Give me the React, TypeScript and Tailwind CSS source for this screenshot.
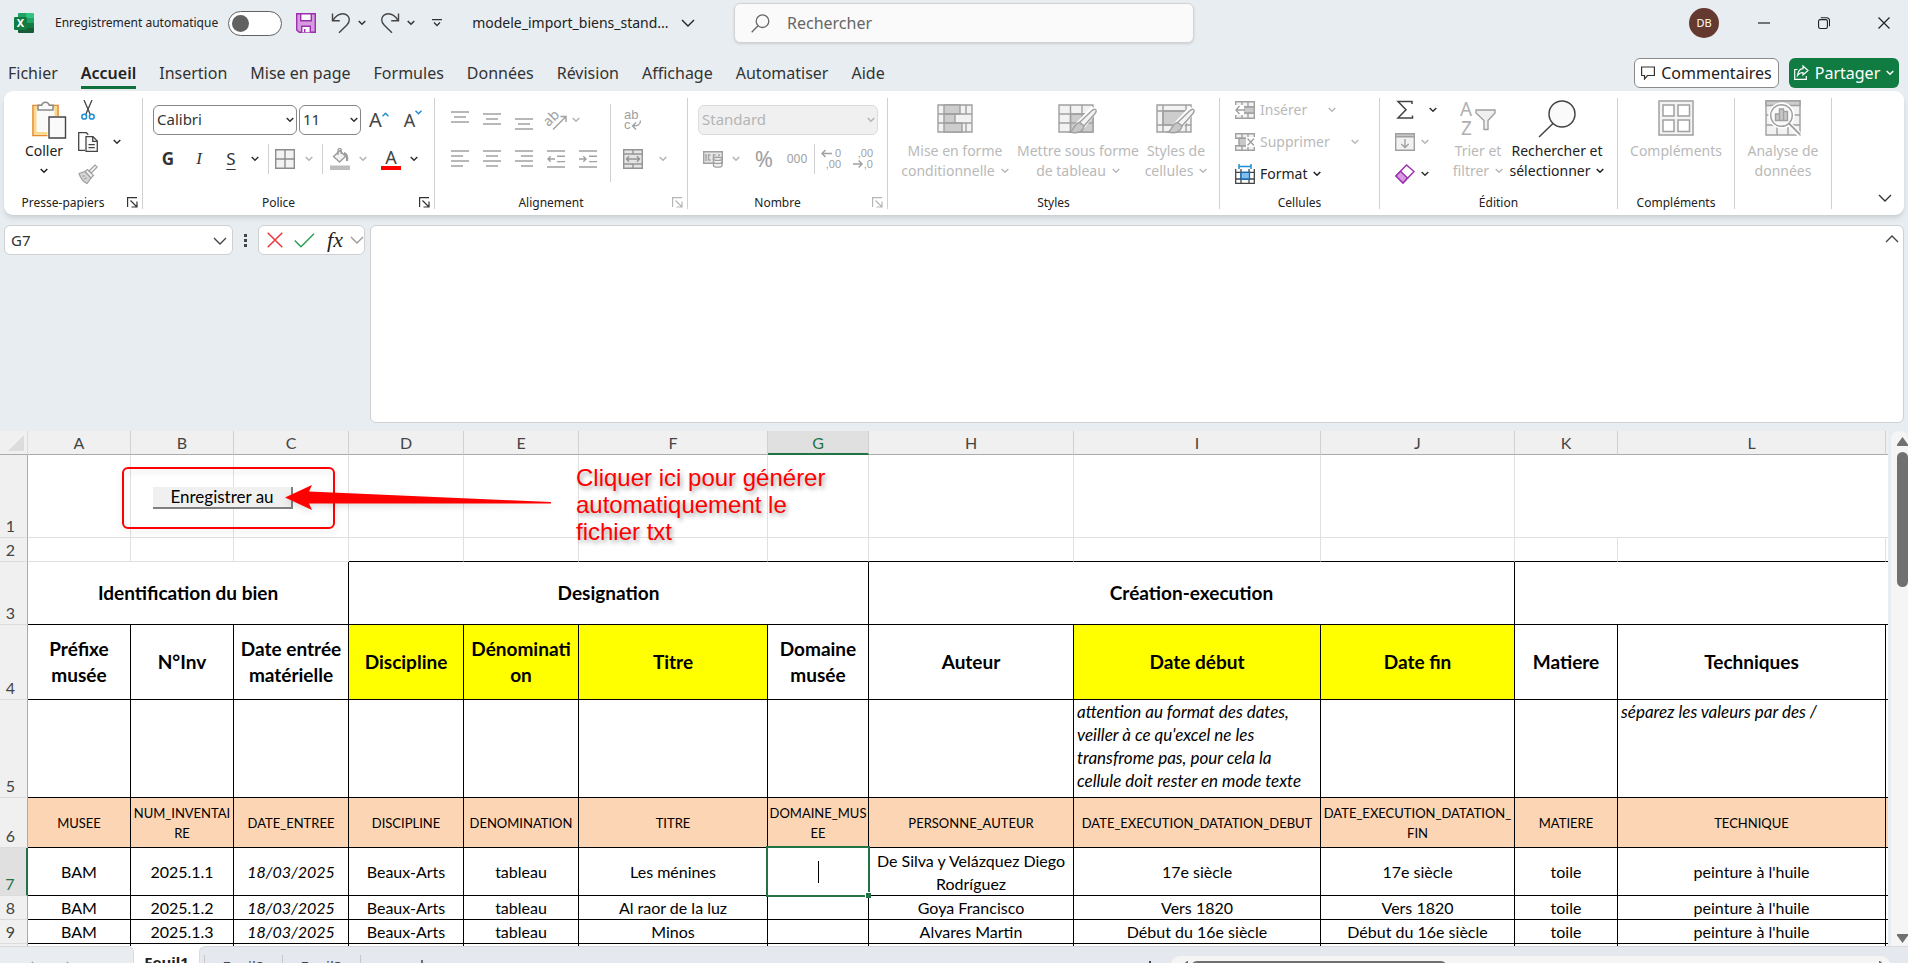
import React from 'react';
import clsx from 'clsx';

const GREY = '#a0a0a0';
const DARK = '#444444';

/* ---------- Icons ---------- */

function Chevron({ big, className }: { big?: boolean; className?: string }) {
  return big ? (
    <svg width="14" height="8" viewBox="0 0 14 8" fill="none" stroke="currentColor" strokeWidth="1.4" className={className}>
      <path d="M1 1l6 6 6-6" />
    </svg>
  ) : (
    <svg width="8" height="6" viewBox="0 0 8 6" fill="none" stroke="currentColor" strokeWidth="1.5" className={className}>
      <path d="M0.7 1L4 4.3 7.3 1" />
    </svg>
  );
}

const ExcelLogo = () => (
  <svg width="20" height="20" viewBox="0 0 20 20">
    <path d="M4 1a1 1 0 011-1h7v5H4z" fill="#21a366" />
    <path d="M12 0h7a1 1 0 011 1v4h-8z" fill="#33c481" />
    <path d="M4 5h8v5H4z" fill="#107c41" />
    <path d="M12 5h8v5h-8z" fill="#21a366" />
    <path d="M4 10h8v5H4z" fill="#185c37" />
    <path d="M12 10h8v5h-8z" fill="#107c41" />
    <path d="M4 15h16v4a1 1 0 01-1 1H5a1 1 0 01-1-1z" fill="#185c37" />
    <rect x="0" y="4" width="13" height="13" rx="1.2" fill="#107c41" />
    <text x="6.5" y="14.3" textAnchor="middle" fontSize="11" fontWeight="bold" fontFamily="Noto Sans, sans-serif" fill="#fff">
      X
    </text>
  </svg>
);

const SaveIcon = () => (
  <svg width="20" height="20" viewBox="0 0 20 20" stroke="#9b2fae" strokeWidth="1.4">
    <path d="M.7.7h18.6v18.6H3.2L.7 17z" fill="#d79be0" />
    <path d="M4.7.7h10.6v7H4.7z" fill="#fafafa" />
    <path d="M5.7 19.3v-6h8.6v6" fill="#fafafa" />
    <path d="M8.7 16v3.3" />
  </svg>
);

const UndoIcon = ({ flip }: { flip?: boolean }) => (
  <svg width="20" height="22" viewBox="0 0 20 22" fill="none" stroke={DARK} strokeWidth="1.4" className={clsx(flip && '-scale-x-100')}>
    <path d="M1.5 1.5v7.3h7.3" />
    <path d="M1.8 8.5C4.5 4.5 7.5 1.8 11.6 1.8c4 0 6.7 2.8 6.7 6 0 2.2-1 3.8-2.6 5.4L8 20.8" />
  </svg>
);

const PasteIcon = () => (
  <svg width="36" height="40" viewBox="0 0 36 40">
    <path d="M2 5.5h25v30H2z" fill="#fafafa" stroke="#e58b2f" strokeWidth="1.6" />
    <path d="M4.2 7.7h20.6v25.6H4.2z" fill="#fafafa" stroke="#fbd98a" strokeWidth="2.6" />
    <path d="M7 10V5.2h3.8a3.8 3.8 0 017.4 0H22V10z" fill="#fafafa" stroke="#8a8a8a" strokeWidth="1.5" />
    <rect x="16.5" y="16" width="19" height="23.5" fill="#fff" />
    <path d="M18 17h16.5v21H18z" fill="#fafafa" stroke={DARK} strokeWidth="1.4" />
  </svg>
);

const CutIcon = () => (
  <svg width="14" height="20" viewBox="0 0 14 20" fill="none">
    <path d="M3 0l6.5 15M11 0L4.5 15" stroke={DARK} strokeWidth="1.3" />
    <circle cx="3.2" cy="16.7" r="2.4" stroke="#1e8fd6" strokeWidth="1.5" />
    <circle cx="10.8" cy="16.7" r="2.4" stroke="#1e8fd6" strokeWidth="1.5" />
  </svg>
);

const CopyIcon = () => (
  <svg width="20" height="20" viewBox="0 0 20 20" stroke={DARK} strokeWidth="1.3">
    <path d="M7 18.3H.7V.7h7.6l2 2" fill="none" />
    <path d="M8 4.7h7l4.3 4.3v10.3H8z" fill="#fafafa" />
    <path d="M14.7 4.7v4.6h4.6M10.5 12.7h6.3M10.5 15.7h6.3" fill="none" />
  </svg>
);

const PainterIcon = () => (
  <svg width="20" height="20" viewBox="0 0 20 20" stroke={GREY} strokeWidth="1.2">
    <path d="M1 9.5l6-2 6 6.5-4 5.5C5.5 18 2.5 14 1 9.5z" fill="#d5d5d5" />
    <path d="M7 7.5l2.5-2 6 6-2.5 2.5z" fill="#f2f2f2" />
    <path d="M11 7l6-6 2.2 2-5.7 6z" fill="#f2f2f2" />
    <path d="M4 12l3 0M6 15l3-1" fill="none" />
  </svg>
);

const Launcher = ({ disabled }: { disabled?: boolean }) => (
  <svg width="11" height="11" viewBox="0 0 11 11" fill="none" stroke={disabled ? '#b5b5b5' : '#333'} strokeWidth="1.2">
    <path d="M.6 10V.6H10M3.5 3.5l6.5 6.5M10 4.5V10H4.5" />
  </svg>
);

const GrowIcon = ({ down }: { down?: boolean }) => (
  <span className="flex items-start text-[#444]">
    <span className={clsx(down ? 'text-lg leading-7' : 'text-xl leading-6')}>A</span>
    <svg width="7" height="5" viewBox="0 0 7 5" fill="none" stroke="#1e8fd6" strokeWidth="1.5" className="mt-1">
      <path d={down ? 'M.5 .7l3 3 3-3' : 'M.5 4.3l3-3 3 3'} />
    </svg>
  </span>
);

const BordersIcon = () => (
  <svg width="20" height="20" viewBox="0 0 20 20" stroke="#8c8c8c" strokeWidth="1.4" fill="#f2f2f2">
    <path d="M.7.7h18.6v18.6H.7zM10 .7v18.6M.7 10h18.6" />
  </svg>
);

const FillIcon = () => (
  <svg width="20" height="22" viewBox="0 0 20 22" fill="none" stroke="#9a9a9a" strokeWidth="1.3">
    <path d="M3.5 8.5L10 2.5l5.5 6-6 5.5z" fill="#f2f2f2" />
    <path d="M8 7V2a1.6 1.6 0 013.2 0v4" />
    <path d="M14 5c2.5.5 3.5 3 3 8" strokeWidth="2.2" />
    <path d="M0 17.5h20V22H0z" fill="#bdbdbd" stroke="none" />
  </svg>
);

const FontColorIcon = () => (
  <span className="flex w-5 flex-col items-center">
    <span className="text-lg leading-[18px] text-[#444]">A</span>
    <span className="h-1 w-full bg-[#ff0000]" />
  </span>
);

/* strokes, each one given as [x, y, width] */
const Lines = ({ rows }: { rows: number[][] }) => (
  <svg width="18" height="22" viewBox="0 0 18 22" stroke={GREY} strokeWidth="1.5">
    {rows.map(([x, y, w]) => (
      <path key={y} d={`M${x} ${y}h${w}`} />
    ))}
  </svg>
);

const IndentIcon = ({ right }: { right?: boolean }) => (
  <svg width="18" height="18" viewBox="0 0 18 18" fill="none" stroke={GREY} strokeWidth="1.4">
    <path d="M0 1h18M10 6.3h8M10 11.6h8M0 17h18" />
    <path d={right ? 'M0 9h7M4.3 6.2L7 9l-2.7 2.8' : 'M1 9h7M3.7 6.2L1 9l2.7 2.8'} />
  </svg>
);

const OrientationIcon = () => (
  <svg width="22" height="22" viewBox="0 0 22 22" fill="none" stroke={GREY} strokeWidth="1.4" className="overflow-visible">
    <text x="1" y="16" transform="rotate(-45 5 14)" fontSize="14" fontFamily="Noto Sans, sans-serif" fill={GREY} stroke="none">
      ab
    </text>
    <path d="M8 20.5L20.5 8M15.5 7.5h5.5V13" />
  </svg>
);

const WrapIcon = () => (
  <svg width="20" height="22" viewBox="0 0 20 22" fill="none" stroke={GREY} strokeWidth="1.4" className="overflow-visible">
    <g fontSize="13" fontFamily="Liberation Sans, sans-serif" fill={GREY} stroke="none">
      <text x="1" y="10">ab</text>
      <text x="1" y="20">c</text>
    </g>
    <path d="M17.5 11.5c0 4-2 5.5-8 5.500M13 13.500L9.500 17l3.500 3.500" />
  </svg>
);

const MergeIcon = () => (
  <svg width="20" height="20" viewBox="0 0 20 20" fill="none" stroke="#949494" strokeWidth="1.4">
    <path d="M.7.7h18.6v18.6H.7z" fill="#e4e4e4" />
    <path d="M.7 5h18.6M.7 15h18.6M10 .7V5M10 15v4.3M3.5 10h13M6 7.3L3.5 10 6 12.7M14 7.3l2.5 2.7-2.5 2.7" />
  </svg>
);

const CurrencyIcon = () => (
  <svg width="20" height="18" viewBox="0 0 20 18" fill="none" stroke={GREY} strokeWidth="1.4">
    <path d="M.7 1.7h18.6v11.6H.7z" fill="#e6e6e6" />
    <path d="M3 4v7M7.5 5h-2v5h2M12.5 5h-2v5M16 4v2" />
    <path d="M10.5 9v6.5c0 2.2 8.5 2.2 8.5 0V9" fill="#f4f4f4" />
    <ellipse cx="14.7" cy="8.8" rx="4.3" ry="1.6" fill="#f4f4f4" />
    <path d="M10.5 12c0 2 8.5 2 8.5 0" />
  </svg>
);

const DecimalIcon = ({ less }: { less?: boolean }) => (
  <svg width="20" height="22" viewBox="0 0 20 22" fill="none" stroke={GREY} strokeWidth="1.4" className="overflow-visible">
    <g fontSize="11" fontFamily="Liberation Sans, sans-serif" fill={GREY} stroke="none" textAnchor="end">
      <text x="20" y="9">{less ? ',00' : '0'}</text>
      <text x="20" y="20">{less ? ',0' : ',00'}</text>
    </g>
    <path d={less ? 'M0 16h9M5.7 12.500L9 16l-3.300 3.500' : 'M1 5.500h10M4.500 2L1 5.500 4.500 9'} />
  </svg>
);

const Brush = () => (
  <>
    <path d="M34 9l3 2.5-11 14-6-1.5z" fill="#fff" stroke="#fff" strokeWidth="4" />
    <path d="M37.5 9.5c1.3.8.5 2.5-.5 4L26 26l-4.5-3.5L33.5 11c1.2-1.2 2.8-2.3 4-1.5z" fill="#f4f4f4" />
    <path d="M21.5 22.5L26 26c-1 6-7 8-14 6 4-1 3-8 9.5-9.5z" fill="#c8c8c8" />
  </>
);

const CondFormatIcon = () => (
  <svg width="36" height="36" viewBox="0 0 36 36" fill="none" stroke={GREY} strokeWidth="1.4">
    <path d="M1 5h34v27H1z" fill="#f2f2f2" />
    <path d="M7 5h16v9H7zM7 23h18v9H7z" fill="#cdcdcd" />
    <path d="M7 14h11v9H7z" fill="#cdcdcd" />
    <path d="M1 14h34M1 23h34M29 5v9M29 23v9" />
  </svg>
);

const TableFormatIcon = () => (
  <svg width="40" height="36" viewBox="0 0 40 36" stroke={GREY} strokeWidth="1.4">
    <path d="M1 5h34v27H1z" fill="#f2f2f2" />
    <path d="M12.5 14H35v18H12.5z" fill="#cdcdcd" />
    <path d="M1 14h34M1 23h34M12.5 5v27M24 5v27" fill="none" />
    <Brush />
  </svg>
);

const CellStylesIcon = () => (
  <svg width="40" height="36" viewBox="0 0 40 36" stroke={GREY} strokeWidth="1.4">
    <path d="M1 5h34v27H1z" fill="#f2f2f2" />
    <path d="M7 11h23v14H7z" fill="#cdcdcd" />
    <path d="M1 11h34M1 25h34M7 5v27M30 5v27" fill="none" />
    <Brush />
  </svg>
);

const InsertCellsIcon = () => (
  <svg width="20" height="18" viewBox="0 0 20 18" fill="#f2f2f2" stroke={GREY} strokeWidth="1.4">
    <path d="M.7.7h18.6v16.6H.7zM.7 6h18.6M.7 12h18.6M7 .7v16.6M13 .7v16.6" />
    <path d="M7 6h12.3v6H7z" fill="#c8c8c8" />
    <path d="M0 4h9v10H0z" fill="#fff" stroke="none" />
    <path d="M1 9h9M4.5 5L1 9l3.5 4" fill="none" />
  </svg>
);

const DeleteCellsIcon = () => (
  <svg width="20" height="18" viewBox="0 0 20 18" fill="#f2f2f2" stroke={GREY} strokeWidth="1.4">
    <path d="M.7.7h18.6v4.5H.7zM.7 12.7h18.6v4.6H.7zM7 .7v16.6M13 .7v4.5M13 12.7v4.6" />
    <path d="M4 5.2h8v7.5H4z" fill="#c8c8c8" />
    <path d="M11 4h9v10h-9z" fill="#fff" stroke="none" />
    <path d="M12.5 5.5l6.5 7M19 5.5l-6.5 7" fill="none" />
  </svg>
);

const FormatCellsIcon = () => (
  <svg width="20" height="20" viewBox="0 0 20 20" fill="none" stroke={DARK} strokeWidth="1.3">
    <path d="M.7 5v14.3h18.6V5M.7 8.3h18.6M.7 15h18.6M6 5v14.3M14 5v14.3" />
    <path d="M6 8.3h8.5V15H6z" fill="#83beec" stroke="#0f6cbd" />
    <path d="M4 2.5h12M4 0v5M16 0v5" stroke="#1e8fd6" strokeWidth="1.5" />
  </svg>
);

const SumIcon = () => (
  <svg width="18" height="20" viewBox="0 0 18 20" fill="none" stroke={DARK} strokeWidth="1.5">
    <path d="M16 4V1.5H2l8 8.3-8 8.2h14.5V15.5" />
  </svg>
);

const FillDownIcon = () => (
  <svg width="20" height="18" viewBox="0 0 20 18" fill="none" stroke={GREY} strokeWidth="1.4">
    <path d="M.7.7h18.6v16.6H.7z" fill="#f2f2f2" />
    <path d="M.7.7h18.6v3H.7z" fill="#c8c8c8" />
    <path d="M10 6v8.5M6.3 11l3.7 3.5 3.7-3.5" />
  </svg>
);

const EraserIcon = () => (
  <svg width="20" height="20" viewBox="0 0 20 20" stroke="#9b2fae" strokeWidth="1.4">
    <path d="M1 12L11.5 1l7.5 6.5L8 19z" fill="#fff" />
    <path d="M1 12l4.500-4.700 7 6.700L8 19z" fill="#d79be0" />
  </svg>
);

const SortFilterIcon = () => (
  <svg width="36" height="36" viewBox="0 0 36 36" fill="none" stroke={GREY} strokeWidth="1.4">
    <g fontSize="19" fontFamily="Noto Sans, sans-serif" fill="#b0b0b0" stroke="none">
      <text x="0" y="16">A</text>
      <text x="1" y="35">Z</text>
    </g>
    <path d="M16 10h19v3l-7 7.5v9h-4v-9L16 13z" fill="#f0f0f0" />
  </svg>
);

const FindIcon = () => (
  <svg width="38" height="38" viewBox="0 0 38 38" fill="#fafafa" stroke={DARK} strokeWidth="1.5">
    <circle cx="24" cy="14" r="13" />
    <path d="M15 23.5L1 37" />
  </svg>
);

const AddinsIcon = () => (
  <svg width="36" height="36" viewBox="0 0 36 36" fill="#f4f4f4" stroke={GREY} strokeWidth="1.5">
    <path d="M1 1h34v34H1z" />
    <path d="M5 5h11v11H5zM20 5h11.5v11H20zM5 20h11v11.5H5zM20 20h11.5v11.5H20z" fill="#fff" />
  </svg>
);

const AnalysisIcon = () => (
  <svg width="36" height="36" viewBox="0 0 36 36" fill="none" stroke={GREY} strokeWidth="1.4">
    <path d="M1 1h34v34H1z" fill="#f2f2f2" />
    <path d="M1 1h34v4.5H1z" fill="#cdcdcd" />
    <path d="M1 15h34M1 25h34M12 25v10M23 25v10" />
    <circle cx="16.5" cy="15.5" r="12.5" fill="#fff" stroke="#fff" />
    <path d="M24 24l11 11" stroke="#fff" strokeWidth="5" />
    <circle cx="16.5" cy="15.5" r="10.8" fill="#fafafa" />
    <path d="M24 23.5L35 34.5" strokeWidth="1.8" />
    <path d="M10.5 14h4v6.5h-4zM14.5 9h4v11.5h-4zM18.5 11.5h4v9h-4z" fill="#c8c8c8" />
  </svg>
);

/* ---------- Ribbon building blocks ---------- */

interface GroupProps {
  label?: string;
  width: string;
  launcher?: 'on' | 'off';
  children: React.ReactNode;
}

function Group({ label, width, launcher, children }: GroupProps) {
  return (
    <>
      <section className={clsx('flex shrink-0 flex-col pt-[3px]', width)} aria-label={label}>
        <div className="flex h-24">{children}</div>
        <div className="flex h-[25px] items-center text-xs text-[#222]">
          <span className="flex-1 text-center">{label}</span>
          {launcher && (
            <button className="flex w-5 justify-center" aria-label={`Options ${label}`}>
              <Launcher disabled={launcher === 'off'} />
            </button>
          )}
        </div>
      </section>
      <div className="h-[111px] w-px shrink-0 self-center bg-[#d0d0d0]" />
    </>
  );
}

interface BigButtonProps {
  icon: React.ReactNode;
  lines: string[];
  width: string;
  chevron?: boolean;
  enabled?: boolean;
}

function BigButton({ icon, lines, width, chevron, enabled }: BigButtonProps) {
  return (
    <button className={clsx('flex shrink-0 flex-col items-center pt-[6px] text-sm leading-5', width, enabled ? 'text-[#222]' : 'text-[#b9b9b9]')}>
      <span className="flex h-[41px] items-start">{icon}</span>
      {lines.map((line, i) => (
        <span key={line} className="flex items-center gap-[6px] whitespace-nowrap">
          {line}
          {chevron && i === lines.length - 1 && <Chevron />}
        </span>
      ))}
    </button>
  );
}

const Cell = ({ w = 'w-8', label, children }: { w?: string; label: string; children: React.ReactNode }) => (
  <button aria-label={label} className={clsx('flex h-8 shrink-0 items-center justify-center', w)}>
    {children}
  </button>
);

const VSep = () => <span className="h-[30px] w-px bg-[#d0d0d0]" />;

interface ComboProps {
  label: string;
  value: string;
  width: string;
  disabled?: boolean;
}

function Combo({ label, value, width, disabled }: ComboProps) {
  return (
    <div className={clsx('relative', width, disabled ? 'text-[#b5b5b5]' : 'text-[#333]')}>
      <select
        aria-label={label}
        disabled={disabled}
        className={clsx(
          'h-[30px] w-full appearance-none rounded-md border px-[3px] text-[15px] opacity-100 outline-none',
          disabled ? 'border-[#dcdcdc] bg-[#f0f0f0]' : 'border-[#868686] bg-white'
        )}
      >
        <option>{value}</option>
      </select>
      <Chevron className="pointer-events-none absolute right-[3px] top-3" />
    </div>
  );
}

/* ---------- Title bar and tabs ---------- */

function TitleBar() {
  return (
    <header className="flex h-[46px] shrink-0 items-center">
      <div className="flex h-full w-[734px] shrink-0 items-center pl-[14px]">
        <ExcelLogo />
        <label htmlFor="autosave" className="ml-[21px] text-xs text-[#222]">
          Enregistrement automatique
        </label>
        <input
          id="autosave"
          type="checkbox"
          className="ml-[10px] h-[25px] w-[54px] appearance-none rounded-full border border-[#616161] bg-white before:ml-[3px] before:mt-[3px] before:block before:h-[17px] before:w-[17px] before:rounded-full before:bg-[#616161]"
        />
        <button aria-label="Enregistrer" className="ml-[14px]"><SaveIcon /></button>
        <button aria-label="Annuler" className="ml-[15px]"><UndoIcon /></button>
        <Chevron className="ml-[7px] text-[#333]" />
        <button aria-label="Rétablir" className="ml-[14px]"><UndoIcon flip /></button>
        <Chevron className="ml-[7px] text-[#333]" />
        <button aria-label="Personnaliser" className="ml-[17px]">
          <svg width="10" height="8" viewBox="0 0 10 8" fill="none" stroke="#333" strokeWidth="1.3">
            <path d="M0 .7h10M2 3.5l3 3 3-3" />
          </svg>
        </button>
        <button className="ml-[30px] flex items-center gap-3 whitespace-nowrap text-sm text-[#222]">
          modele_import_biens_stand...
          <Chevron big />
        </button>
      </div>
      <div className="mt-[3px] flex h-10 w-[460px] shrink-0 items-center gap-[17px] self-start rounded-md border border-[#d3d3d3] bg-[#fafafa] pl-4 shadow-sm">
        <svg width="19" height="19" viewBox="0 0 19 19" fill="none" stroke="#666" strokeWidth="1.3">
          <circle cx="11.5" cy="7.2" r="6.3" />
          <path d="M7 11.8L.7 18.3" />
        </svg>
        <input aria-label="Rechercher" placeholder="Rechercher" className="flex-1 bg-transparent text-base outline-none placeholder:text-[#666]" />
      </div>
      <div className="flex h-full flex-1 items-center justify-end gap-12 pr-[18px]">
        <button aria-label="Compte" className="-mr-[9px] h-[30px] w-[30px] rounded-full bg-[#643a30] text-[11px] text-white">
          DB
        </button>
        <button aria-label="Réduire">
          <svg width="12" height="12" stroke="#222" strokeWidth="1.2"><path d="M0 6h12" /></svg>
        </button>
        <button aria-label="Niveau inférieur">
          <svg width="12" height="12" viewBox="0 0 13 13" fill="none" stroke="#222" strokeWidth="1.2">
            <rect x=".6" y="2.8" width="9.6" height="9.6" rx="1.8" />
            <path d="M3 .8h6.5a3 3 0 013 3V10" />
          </svg>
        </button>
        <button aria-label="Fermer">
          <svg width="12" height="12" stroke="#222" strokeWidth="1.2"><path d="M.5.5l11 11M11.5.5l-11 11" /></svg>
        </button>
      </div>
    </header>
  );
}

const tabs = ['Fichier', 'Accueil', 'Insertion', 'Mise en page', 'Formules', 'Données', 'Révision', 'Affichage', 'Automatiser', 'Aide'];

function TabBar() {
  return (
    <nav className="flex h-[45px] shrink-0 items-center pl-2 pr-[9px] pt-2">
      <div className="flex flex-1 items-center gap-[23px] text-base text-[#333]">
        {tabs.map((tab) => (
          <a
            key={tab}
            href="#"
            className={clsx('flex h-8 items-center whitespace-nowrap border-b-[3px] pt-[3px]', tab === 'Accueil' ? 'border-[#0f703b] font-semibold text-[#222]' : 'border-transparent')}
          >
            {tab}
          </a>
        ))}
      </div>
      <div className="flex gap-[10px] text-base">
        <button className="flex h-[30px] w-[145px] items-center justify-center gap-[6px] rounded-md border border-[#8a8a8a] bg-white text-[#222]">
          <svg width="14" height="14" viewBox="0 0 14 14" fill="none" stroke="#333" strokeWidth="1.2">
            <path d="M.6 1h12.8v8.5H6.5L3.5 13V9.5H.6z" />
          </svg>
          Commentaires
        </button>
        <button className="flex h-[30px] w-[110px] items-center justify-center gap-[6px] rounded-md bg-[#107c41] text-white">
          <svg width="15" height="15" viewBox="0 0 15 15" fill="none" stroke="#fff" strokeWidth="1.2">
            <path d="M3.5 4.5H.7v9.8h11.6V11M9 1l5 4.5L9 10V7.5C6.5 7.5 5 8.5 3.5 10.5 4 6.5 5.5 4 9 3.7z" />
          </svg>
          Partager
          <Chevron />
        </button>
      </div>
    </nav>
  );
}

/* ---------- Ribbon ---------- */

function Ribbon() {
  return (
    <div className="mx-1 flex h-[124px] shrink-0 overflow-hidden rounded-[9px] bg-white shadow-md">
      <Group label="Presse-papiers" width="w-[138px]" launcher="on">
        <button className="flex w-[66px] flex-col items-center pl-[14px] pt-[6px] text-sm leading-5 text-[#222]">
          <span className="flex h-[41px] w-full justify-end pr-[3px]"><PasteIcon /></span>
          <span>Coller</span>
          <Chevron className="mt-[7px]" />
        </button>
        <div className="flex flex-col pl-[2px] text-[#333]">
          <Cell label="Couper"><CutIcon /></Cell>
          <div className="flex items-center">
            <Cell label="Copier"><CopyIcon /></Cell>
            <Chevron className="ml-[9px]" />
          </div>
          <Cell label="Reproduire la mise en forme"><PainterIcon /></Cell>
        </div>
      </Group>

      <Group label="Police" width="w-[291px]" launcher="on">
        <div className="flex flex-col pl-[10px] pt-[6px]">
          <div className="flex h-[39px] items-center gap-[2px]">
            <Combo label="Police" value="Calibri" width="w-[144px]" />
            <Combo label="Taille" value="11" width="w-[62px]" />
            <Cell w="w-8" label="Augmenter la taille"><GrowIcon /></Cell>
            <Cell label="Réduire la taille"><GrowIcon down /></Cell>
          </div>
          <div className="flex h-[39px] items-center text-[17px] text-[#333]">
            <Cell w="w-[30px]" label="Gras"><b>G</b></Cell>
            <Cell label="Italique"><i className="font-['Liberation_Serif',serif]">I</i></Cell>
            <Cell label="Souligné"><u className="underline-offset-4">S</u></Cell>
            <Chevron className="ml-1" />
            <span className="w-[9px]" />
            <VSep />
            <Cell label="Bordures"><BordersIcon /></Cell>
            <Chevron className="ml-1 text-[#b5b5b5]" />
            <span className="w-[9px]" />
            <VSep />
            <Cell w="w-[34px]" label="Remplissage"><FillIcon /></Cell>
            <Chevron className="ml-[2px] text-[#b5b5b5]" />
            <span className="w-2" />
            <Cell label="Couleur de police"><FontColorIcon /></Cell>
            <Chevron className="ml-[3px]" />
          </div>
        </div>
      </Group>

      <Group label="Alignement" width="w-[252px]" launcher="off">
        <div className="flex w-[175px] flex-col pl-[9px] pt-[6px] text-[#b5b5b5]">
          <div className="flex h-[39px] items-center">
            <Cell label="Aligner en haut"><Lines rows={[[0, 3, 18], [3, 8, 12], [0, 13, 18]]} /></Cell>
            <Cell label="Aligner au centre"><Lines rows={[[0, 5, 18], [3, 10, 12], [0, 15, 18]]} /></Cell>
            <Cell label="Aligner en bas"><Lines rows={[[0, 10, 18], [3, 15, 12], [0, 20, 18]]} /></Cell>
            <Cell label="Orientation"><OrientationIcon /></Cell>
            <Chevron />
          </div>
          <div className="flex h-[39px] items-center">
            <Cell label="Aligner à gauche"><Lines rows={[[0, 3, 18], [0, 8, 12], [0, 13, 18], [0, 18, 12]]} /></Cell>
            <Cell label="Centrer"><Lines rows={[[0, 3, 18], [3, 8, 12], [0, 13, 18], [3, 18, 12]]} /></Cell>
            <Cell label="Aligner à droite"><Lines rows={[[0, 3, 18], [6, 8, 12], [0, 13, 18], [6, 18, 12]]} /></Cell>
            <Cell label="Diminuer le retrait"><IndentIcon /></Cell>
            <Cell label="Augmenter le retrait"><IndentIcon right /></Cell>
          </div>
        </div>
        <span className="mt-[10px] h-[78px] w-px bg-[#d0d0d0]" />
        <div className="flex flex-col pl-[6px] pt-[6px] text-[#b5b5b5]">
          <div className="flex h-[39px] items-center">
            <Cell label="Renvoyer à la ligne"><WrapIcon /></Cell>
          </div>
          <div className="flex h-[39px] items-center">
            <Cell label="Fusionner"><MergeIcon /></Cell>
            <Chevron className="ml-[10px]" />
          </div>
        </div>
      </Group>

      <Group label="Nombre" width="w-[199px]" launcher="off">
        <div className="flex flex-col pl-[10px] pt-[6px]">
          <div className="flex h-[39px] items-center">
            <Combo label="Format de nombre" value="Standard" width="w-[180px]" disabled />
          </div>
          <div className="flex h-[39px] items-center text-[#a0a0a0]">
            <Cell w="w-[30px]" label="Format comptable"><CurrencyIcon /></Cell>
            <Chevron className="ml-1 text-[#b5b5b5]" />
            <span className="w-2" />
            <Cell label="Pourcentage"><span className="text-[22px]">%</span></Cell>
            <Cell w="w-[34px]" label="Milliers"><span className="text-xs">000</span></Cell>
            <VSep />
            <Cell label="Ajouter une décimale"><DecimalIcon /></Cell>
            <Cell label="Réduire les décimales"><DecimalIcon less /></Cell>
          </div>
        </div>
      </Group>

      <Group label="Styles" width="w-[331px]">
        <span className="w-2" />
        <BigButton width="w-[118px]" icon={<CondFormatIcon />} lines={['Mise en forme', 'conditionnelle']} chevron />
        <BigButton width="w-[128px]" icon={<TableFormatIcon />} lines={['Mettre sous forme', 'de tableau']} chevron />
        <BigButton width="w-[68px]" icon={<CellStylesIcon />} lines={['Styles de', 'cellules']} chevron />
      </Group>

      <Group label="Cellules" width="w-[159px]">
        <div className="flex flex-col pl-[15px] text-sm text-[#b9b9b9]">
          <button className="flex h-8 items-center gap-[5px]">
            <InsertCellsIcon /> Insérer <Chevron className="ml-4" />
          </button>
          <button className="flex h-8 items-center gap-[5px]">
            <DeleteCellsIcon /> Supprimer <Chevron className="ml-4" />
          </button>
          <button className="flex h-8 items-center gap-[5px] text-[#222]">
            <FormatCellsIcon /> Format <Chevron />
          </button>
        </div>
      </Group>

      <Group label="Édition" width="w-[237px]">
        <div className="flex w-[60px] flex-col pl-[9px] text-[#333]">
          <div className="flex items-center"><Cell label="Somme"><SumIcon /></Cell><Chevron className="ml-2" /></div>
          <div className="flex items-center"><Cell label="Remplissage"><FillDownIcon /></Cell><Chevron className="text-[#b5b5b5]" /></div>
          <div className="flex items-center"><Cell label="Effacer"><EraserIcon /></Cell><Chevron /></div>
        </div>
        <span className="w-[10px]" />
        <BigButton width="w-[56px]" icon={<SortFilterIcon />} lines={['Trier et', 'filtrer']} chevron />
        <BigButton width="w-[102px]" icon={<FindIcon />} lines={['Rechercher et', 'sélectionner']} chevron enabled />
      </Group>

      <Group label="Compléments" width="w-[116px]">
        <BigButton width="w-[116px]" icon={<AddinsIcon />} lines={['Compléments']} />
      </Group>

      <Group width="w-[96px]">
        <BigButton width="w-[96px]" icon={<AnalysisIcon />} lines={['Analyse de', 'données']} />
      </Group>

      <div className="flex flex-1 items-end justify-end pb-[13px] pr-3">
        <button aria-label="Réduire le ruban" className="text-[#333]"><Chevron big /></button>
      </div>
    </div>
  );
}

/* ---------- Formula bar ---------- */

function FormulaBar() {
  return (
    <div className="flex h-[216px] shrink-0 items-start px-1 pt-[10px]">
      <div className="relative w-[229px]">
        <input aria-label="Zone Nom" defaultValue="G7" className="h-[30px] w-full rounded-md border border-[#d0d0d0] bg-white px-[6px] text-[15px] text-[#333] outline-none" />
        <Chevron big className="pointer-events-none absolute right-[6px] top-3 text-[#444]" />
      </div>
      <svg width="25" height="30" viewBox="0 0 25 30" fill="#444">
        <path d="M11 9h3v3h-3zM11 14h3v3h-3zM11 19h3v3h-3z" />
      </svg>
      <div className="flex h-[30px] w-[107px] items-center rounded-md border border-[#d0d0d0] bg-white pl-2">
        <button aria-label="Annuler la saisie">
          <svg width="16" height="16" fill="none" stroke="#e8383d" strokeWidth="1.5"><path d="M.7.7l14.6 14.6M15.3.7L.7 15.3" /></svg>
        </button>
        <button aria-label="Entrer" className="ml-[11px]">
          <svg width="21" height="15" fill="none" stroke="#2e9e4f" strokeWidth="1.5"><path d="M.7 7.5L7 13.7 20 .8" /></svg>
        </button>
        <button aria-label="Insérer une fonction" className="ml-[10px] w-5 font-['Liberation_Serif',serif] text-[22px] italic leading-6 text-[#222]">
          fx
        </button>
        <Chevron big className="ml-[5px] text-[#9a9a9a]" />
      </div>
      <div className="relative ml-[5px] flex-1">
        <textarea aria-label="Barre de formule" className="block h-[198px] w-full resize-none rounded-md border border-[#d0d0d0] bg-white outline-none" />
        <Chevron big className="pointer-events-none absolute right-[5px] top-[10px] rotate-180 text-[#444]" />
      </div>
    </div>
  );
}

/* ---------- Sheet ---------- */

const columns = ['A', 'B', 'C', 'D', 'E', 'F', 'G', 'H', 'I', 'J', 'K', 'L'];
const colWidths = [
  'w-[28px]', 'w-[103px]', 'w-[103px]', 'w-[115px]', 'w-[115px]', 'w-[115px]', 'w-[189px]',
  'w-[101px]', 'w-[205px]', 'w-[247px]', 'w-[194px]', 'w-[103px]', 'w-[268px]',
];

const headings = ['Préfixe\nmusée', 'N°Inv', 'Date entrée\nmatérielle', 'Discipline', 'Dénominati\non', 'Titre', 'Domaine\nmusée', 'Auteur', 'Date début', 'Date fin', 'Matiere', 'Techniques', ''];
const required = ['Discipline', 'Dénominati\non', 'Titre', 'Date début', 'Date fin'];

const notes = [
  '', '', '', '', '', '', '', '',
  "attention au format des dates,\nveiller à ce qu'excel ne les\ntransfrome pas, pour cela la\ncellule doit rester en mode texte",
  '', '', 'séparez les valeurs par des /', '',
];

const fields = [
  'MUSEE', 'NUM_INVENTAI\nRE', 'DATE_ENTREE', 'DISCIPLINE', 'DENOMINATION', 'TITRE', 'DOMAINE_MUS\nEE',
  'PERSONNE_AUTEUR', 'DATE_EXECUTION_DATATION_DEBUT', 'DATE_EXECUTION_DATATION_\nFIN', 'MATIERE', 'TECHNIQUE', '',
];

const records = [
  { n: 7, h: 'h-[48px]', cells: ['BAM', '2025.1.1', '18/03/2025', 'Beaux-Arts', 'tableau', 'Les ménines', '', 'De Silva y Velázquez Diego\nRodríguez', '17e siècle', '17e siècle', 'toile', "peinture à l'huile", ''] },
  { n: 8, h: 'h-[24px]', cells: ['BAM', '2025.1.2', '18/03/2025', 'Beaux-Arts', 'tableau', 'Al raor de la luz', '', 'Goya Francisco', 'Vers 1820', 'Vers 1820', 'toile', "peinture à l'huile", ''] },
  { n: 9, h: 'h-[24px]', cells: ['BAM', '2025.1.3', '18/03/2025', 'Beaux-Arts', 'tableau', 'Minos', '', 'Alvares Martin', 'Début du 16e siècle', 'Début du 16e siècle', 'toile', "peinture à l'huile", ''] },
];

function RowHead({ n, active }: { n?: number; active?: boolean }) {
  return (
    <th
      scope="row"
      className={clsx(
        'border-b border-b-[#dcdcdc] pr-[6px] text-center align-bottom text-base font-normal not-italic leading-[23px]',
        active ? 'border-r-2 border-r-[#217346] bg-[#e0e0e0] text-[#217346]' : 'border-r border-r-[#ababab] bg-[#f0f0f0] text-[#444]'
      )}
    >
      {n}
    </th>
  );
}

const light = 'border-r border-b border-[#e0e0e0]';
const dark = 'border-r border-b border-black';

function Sheet() {
  return (
    <table className="w-full table-fixed border-separate border-spacing-0 bg-white text-center font-['Lato',sans-serif] text-base text-black">
      <colgroup>
        {colWidths.map((w, i) => <col key={i} className={w} />)}
        <col />
      </colgroup>
      <thead>
        <tr className="h-6 bg-[#f0f0f0] text-[#444]">
          <th className="border-b border-r border-b-[#ababab] border-r-[#dcdcdc] bg-[#f0f0f0]" aria-label="Tout sélectionner">
            <svg width="16" height="16" viewBox="0 0 16 16" className="ml-2" fill="#dcdcdc"><path d="M16 0v16H0z" /></svg>
          </th>
          {columns.map((c) => (
            <th
              key={c}
              scope="col"
              className={clsx(
                'border-r border-r-[#d0d0d0] font-normal leading-[21px]',
                c === 'G' ? 'border-b-2 border-b-[#217346] bg-[#e0e0e0] text-[#217346]' : 'border-b border-b-[#ababab]'
              )}
            >
              {c}
            </th>
          ))}
          <th className="border-b border-[#ababab]" />
        </tr>
      </thead>
      <tbody>
        <tr className="h-[83px]">
          <RowHead n={1} />
          {columns.slice(0, 10).map((c) => <td key={c} className={light} />)}
          <td colSpan={3} className="border-b border-[#e0e0e0]" />
        </tr>
        <tr className="h-6">
          <RowHead n={2} />
          {columns.map((c, i) => <td key={c} className={clsx('border-b border-r border-r-[#e0e0e0]', i < 3 ? 'border-b-[#e0e0e0]' : 'border-b-black')} />)}
          <td className="border-b border-black" />
        </tr>
        <tr className="h-[63px] text-[19px] font-bold">
          <RowHead n={3} />
          <td colSpan={3} className={dark}>Identification du bien</td>
          <td colSpan={4} className={dark}>Designation</td>
          <td colSpan={3} className={dark}>Création-execution</td>
          <td colSpan={3} className="border-b border-black" />
        </tr>
        <tr className="h-[75px] whitespace-pre-line text-[19px] font-bold leading-[26px]">
          <RowHead n={4} />
          {headings.map((h, i) => (
            <td key={i} className={clsx(i === 12 ? 'border-b border-black' : dark, required.includes(h) && 'bg-[#ffff00]')}>{h}</td>
          ))}
        </tr>
        <tr className="h-[98px] whitespace-pre-line text-left align-top text-[17px] italic leading-[23px]">
          <RowHead n={5} />
          {notes.map((t, i) => <td key={i} className={clsx(i === 12 ? 'border-b border-black' : dark, t && 'px-[3px]')}>{t}</td>)}
        </tr>
        <tr className="h-[50px] whitespace-pre-line text-[13px] leading-5">
          <RowHead n={6} />
          {fields.map((t, i) => <td key={i} className={clsx('bg-[#fcd5b4]', i === 12 ? 'border-b border-black' : dark)}>{t}</td>)}
        </tr>
        {records.map((r) => (
          <tr key={r.n} className={clsx('whitespace-pre-line leading-[23px]', r.h)}>
            <RowHead n={r.n} active={r.n === 7} />
            {r.cells.map((t, i) => (
              <td key={i} className={clsx(i === 12 ? 'border-b border-black' : dark, i === 2 && 'italic', r.n === 7 && i === 6 && 'relative')}>
                {t}
                {r.n === 7 && i === 6 && (
                  <div className="absolute -inset-[2px] flex items-center justify-center border-2 border-[#217346]">
                    <span className="h-[22px] w-px bg-black" />
                    <span className="absolute -bottom-[3px] -right-[3px] h-[6px] w-[6px] border-l border-t border-white bg-[#217346]" />
                  </div>
                )}
              </td>
            ))}
          </tr>
        ))}
        <tr className="h-[2px]">
          <th className="border-r border-[#ababab] bg-[#f0f0f0]" />
          {columns.map((c) => <td key={c} className="border-r border-black" />)}
          <td />
        </tr>
      </tbody>
    </table>
  );
}

/* Red frame, arrow and hint laid over row 1 */
function Annotations() {
  return (
    <>
      <button className="absolute left-[153px] top-[56px] h-[22px] w-[140px] border-b-2 border-r-2 border-[#808080] bg-[#f0f0f0] font-['Lato',sans-serif] text-[17px] leading-5 text-black">
        Enregistrer au
      </button>
      <div className="absolute left-[122px] top-[36px] h-[62px] w-[213px] rounded-md border-2 border-[#ff0000] drop-shadow-md" />
      <svg width="272" height="32" viewBox="0 0 272 32" className="absolute left-[283px] top-[51px] drop-shadow-md" fill="#ff0000">
        <path d="M2 15.5L29 3l-3 6.500 242 10.500v1.500L26 21.500l3 6.500z" />
      </svg>
      <p className="absolute left-[576px] top-[33px] w-[270px] font-['Liberation_Sans',sans-serif] text-2xl leading-[27px] text-[#ff0000] [text-shadow:2px_3px_4px_rgba(0,0,0,0.35)]">
        Cliquer ici pour générer automatiquement le
        <br />
        fichier txt
      </p>
    </>
  );
}

function ScrollBar() {
  return (
    <div className="ml-[3px] flex w-[17px] shrink-0 flex-col items-center rounded-t-lg bg-[#f5f5f5] pl-[5px] pt-[6px]">
      <svg width="11" height="9" viewBox="0 0 11 9" fill="#707070"><path d="M5.5 0L11 7.5V9H0V7.5z" /></svg>
      <div className="mt-[6px] h-[135px] w-[11px] rounded-full bg-[#707070]" />
      <div className="flex-1" />
      <svg width="11" height="9" viewBox="0 0 11 9" fill="#707070" className="mb-[3px]"><path d="M5.5 9L11 1.5V0H0v1.500z" /></svg>
    </div>
  );
}

function SheetTabs() {
  return (
    <footer className="flex h-10 shrink-0 bg-white text-[15px] text-[#444]">
      <div className="flex w-[134px] items-center gap-8 rounded-tr-md border-r border-t border-[#d8dade] bg-[#e9ecf0] pl-7 text-[#9a9a9a]">
        <svg width="6" height="12" fill="none" stroke="currentColor" strokeWidth="1.5"><path d="M5 1L1 6l4 5" /></svg>
        <svg width="6" height="12" fill="none" stroke="currentColor" strokeWidth="1.5"><path d="M1 1l4 5-4 5" /></svg>
      </div>
      <button className="h-8 w-[65px] font-bold text-[#222]">Feuil1</button>
      <div className="flex flex-1 items-center rounded-tl-md border-l border-t border-[#d8dade] bg-[#e5e8ee] pl-1">
        <button className="h-6 w-[78px] border-l border-[#c8c8c8]">Feuil2</button>
        <button className="h-6 w-[78px] border-l border-[#c8c8c8]">Feuil3</button>
        <button aria-label="Nouvelle feuille" className="flex h-6 w-[122px] items-center justify-center border-l border-[#c8c8c8]">
          <svg width="14" height="14" stroke="#444" strokeWidth="1.5"><path d="M7 0v14M0 7h14" /></svg>
        </button>
        <div className="flex-1" />
        <span className="mr-[19px] h-3 w-[2px] bg-[#444]" />
        <div className="mr-[17px] flex h-[22px] w-[721px] items-center rounded-full bg-[#f5f5f5] pl-[11px] pr-[5px]">
          <svg width="7" height="11" fill="#707070"><path d="M0 5.5L6 0h1v11H6z" /></svg>
          <span className="ml-[3px] h-3 w-64 rounded-full bg-[#707070]" />
          <span className="flex-1" />
          <svg width="7" height="11" fill="#707070"><path d="M7 5.5L1 0H0v11h1z" /></svg>
        </div>
      </div>
    </footer>
  );
}

export default function App() {
  return (
    <div className="flex h-screen flex-col overflow-hidden bg-[#e8edf1] font-['Noto_Sans',sans-serif]">
      <TitleBar />
      <TabBar />
      <Ribbon />
      <FormulaBar />
      <main className="flex shrink-0">
        <div className="relative flex-1">
          <Sheet />
          <Annotations />
        </div>
        <ScrollBar />
      </main>
      <SheetTabs />
    </div>
  );
}
